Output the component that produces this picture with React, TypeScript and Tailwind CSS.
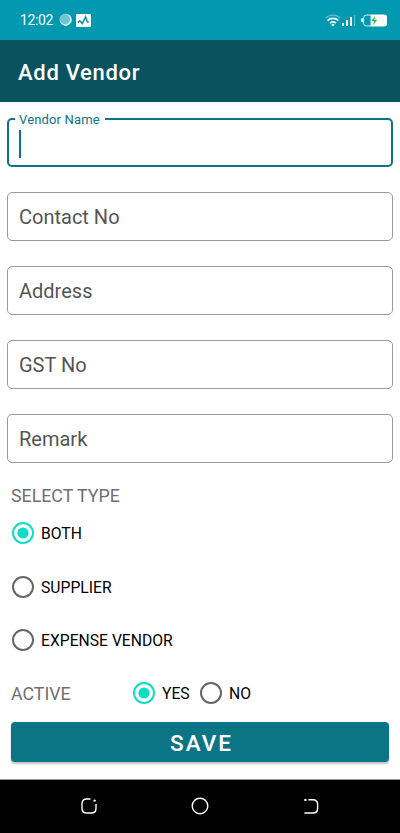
import React from "react";
import clsx from "clsx";

// ============================================================================
// CONFIGURATION
// ============================================================================

const FIELDS = ["Contact No", "Address", "GST No", "Remark"];

const VENDOR_TYPES = [
  { label: "BOTH", checked: true, width: "w-[41px]" },
  { label: "SUPPLIER", checked: false, width: "w-[71px]" },
  { label: "EXPENSE VENDOR", checked: false, width: "w-[132px]" },
];

// ============================================================================
// STATUS BAR
// ============================================================================

function StatusBar() {
  return (
    <div className="flex h-10 items-center bg-[#0199b0] pr-[13px] pl-5 text-white">
      <span className="w-[33px] text-[14px] leading-5 tracking-[-0.4px]">12:02</span>
      <svg className="ml-[6px]" width="14" height="14" viewBox="0 0 14 14">
        <circle cx="6.7" cy="6.8" r="6.1" fill="#d5f0f3" />
        <circle cx="5.9" cy="6.1" r="5.2" fill="#72c5d0" />
      </svg>
      <svg className="ml-[3px]" width="15" height="13" viewBox="0 0 15 13">
        <rect width="15" height="13" rx="1" fill="#fff" />
        <path
          d="M1.8 8.6l2-1.6 2.6 2.4 3.2-6.4 1.8 5 1.4-.2"
          fill="none"
          stroke="#0d93a8"
          strokeWidth="1.5"
        />
      </svg>

      <div className="ml-auto flex items-center">
        <svg width="16" height="13" viewBox="0 0 16 13" fill="none">
          <path d="M.6 4.1a10.5 10.5 0 0 1 14.8 0" stroke="#58bccb" strokeWidth="1.3" />
          <path d="M2.6 6.6a7.6 7.6 0 0 1 10.8 0" stroke="#fff" strokeWidth="1.6" />
          <path d="M5 9.1a4.2 4.2 0 0 1 6 0" stroke="#fff" strokeWidth="1.6" />
          <path d="M6.3 10.7a2.4 2.4 0 0 1 3.4 0L8 12.6z" fill="#fff" />
        </svg>
        <svg className="ml-[1px]" width="14" height="12" viewBox="0 0 14 12" fill="#fff">
          <rect x="0" y="9" width="2" height="3" />
          <rect x="4" y="6" width="2" height="6" />
          <rect x="8" y="3" width="2" height="9" />
          <rect x="12" y="1" width="1.2" height="11" fill="#58bccb" />
        </svg>
        <svg className="ml-[5px]" width="26" height="13" viewBox="0 0 26 13">
          <rect x="0" y="4.2" width="2" height="4" rx="1" fill="#fff" />
          <rect x="2.6" y="1.1" width="22.8" height="10.8" rx="2.6" fill="none" stroke="#d6f0f4" />
          <path d="M9.6.8h14.8a1.4 1.4 0 0 1 1.4 1.4v8.6a1.4 1.4 0 0 1-1.4 1.4H9.6z" fill="#fff" />
          <path d="M14.3 1.8l-4 5.3h2.8l-1 4.1 4-5.3h-2.7z" fill="#1fbf4d" />
        </svg>
      </div>
    </div>
  );
}

// ============================================================================
// FORM CONTROLS
// ============================================================================

function FocusedField({ label }: { label: string }) {
  return (
    <div className="relative flex h-[49px] items-center rounded-[5px] border-2 border-[#0b7585] pl-[10px]">
      <span className="absolute -top-[8px] left-[6px] bg-white pr-[5px] pl-1 text-[13px] leading-4 tracking-[0.16px] whitespace-nowrap text-[#0b7585]">
        {label}
      </span>
      <span className="mt-[3px] h-7 w-[2px] bg-[#0b7585]" />
    </div>
  );
}

function TextField({ label }: { label: string }) {
  return (
    <div className="flex h-[49px] items-center rounded-[5px] border border-[#9b9b9b] pt-[2px] pl-[11px] text-[20px] leading-[29px] text-[#555]">
      {label}
    </div>
  );
}

function Radio({ label, checked, width }: { label: string; checked: boolean; width: string }) {
  return (
    <div className="flex h-6 items-center gap-[6px]">
      <svg
        width="24"
        height="24"
        viewBox="0 0 24 24"
        className={clsx("shrink-0", checked ? "text-[#0fdcc6]" : "text-[#666]")}
      >
        <circle cx="12" cy="12" r="10" fill="none" stroke="currentColor" strokeWidth="2" />
        {checked && <circle cx="12" cy="12" r="5.6" fill="currentColor" />}
      </svg>
      <span className={clsx("pt-[2px] text-[15.7px] leading-6 whitespace-nowrap text-black", width)}>
        {label}
      </span>
    </div>
  );
}

// ============================================================================
// NAVIGATION BAR
// ============================================================================

function NavigationBar() {
  return (
    <div className="flex h-[54px] items-center justify-between border-t border-[#999] bg-black px-20 pb-[2px]">
      <svg width="18" height="18" viewBox="0 0 18 18" fill="none" stroke="#fff" strokeWidth="1.4">
        <path d="M10.5 2H6.8C3.4 2 2 3.4 2 6.8v4.4C2 14.6 3.4 16 6.8 16h4.4c3.4 0 4.8-1.4 4.8-4.8V7" />
        <circle cx="14.6" cy="3.6" r="1.2" fill="#fff" stroke="none" />
      </svg>
      <svg width="18" height="18" viewBox="0 0 18 18" fill="none" stroke="#fff" strokeWidth="1.4">
        <circle cx="9" cy="9" r="7.8" />
      </svg>
      <svg width="18" height="18" viewBox="0 0 18 18" fill="none" stroke="#fff" strokeWidth="1.4">
        <path d="M6.4 2.8h4.4c3.4 0 4.8 1.4 4.8 4.8v3.6c0 3.4-1.4 4.8-4.8 4.8H2.4" />
        <circle cx="3.4" cy="2.9" r="1.2" fill="#fff" stroke="none" />
      </svg>
    </div>
  );
}

// ============================================================================
// APP
// ============================================================================

export default function App() {
  return (
    <div className="flex h-[833px] w-[400px] flex-col overflow-hidden bg-white font-['Roboto',sans-serif]">
      <StatusBar />
      <header className="flex h-[62px] items-center bg-[#08535e] pt-[2px] pl-[18px]">
        <h1 className="text-[22px] font-medium tracking-[0.7px] text-white">Add Vendor</h1>
      </header>

      <main className="flex flex-1 flex-col pt-4">
        <div className="flex flex-col gap-[25px] px-[7px]">
          <FocusedField label="Vendor Name" />
          {FIELDS.map((field) => (
            <TextField key={field} label={field} />
          ))}
        </div>

        <div className="flex flex-col px-[11px]">
          <h2 className="mt-[19px] text-[17.8px] leading-7 text-[#6f6f6f]">SELECT TYPE</h2>
          <div className="mt-[11px] flex flex-col gap-[29.5px]">
            {VENDOR_TYPES.map((type) => (
              <Radio key={type.label} {...type} />
            ))}
          </div>

          <div className="mt-[29px] flex h-6 items-center">
            <span className="w-[121px] pt-[2px] text-[17.8px] leading-6 text-[#6f6f6f]">ACTIVE</span>
            <div className="flex gap-[9px]">
              <Radio label="YES" checked width="w-[28px]" />
              <Radio label="NO" checked={false} width="w-[22px]" />
            </div>
          </div>

          <button className="mt-[17px] h-10 rounded-[4px] bg-[#0b7585] pt-[3px] pl-[3px] text-[22.5px] font-medium tracking-[2px] text-white shadow-[0_2px_2px_rgba(0,0,0,0.25)]">
            SAVE
          </button>
        </div>
      </main>

      <NavigationBar />
    </div>
  );
}
